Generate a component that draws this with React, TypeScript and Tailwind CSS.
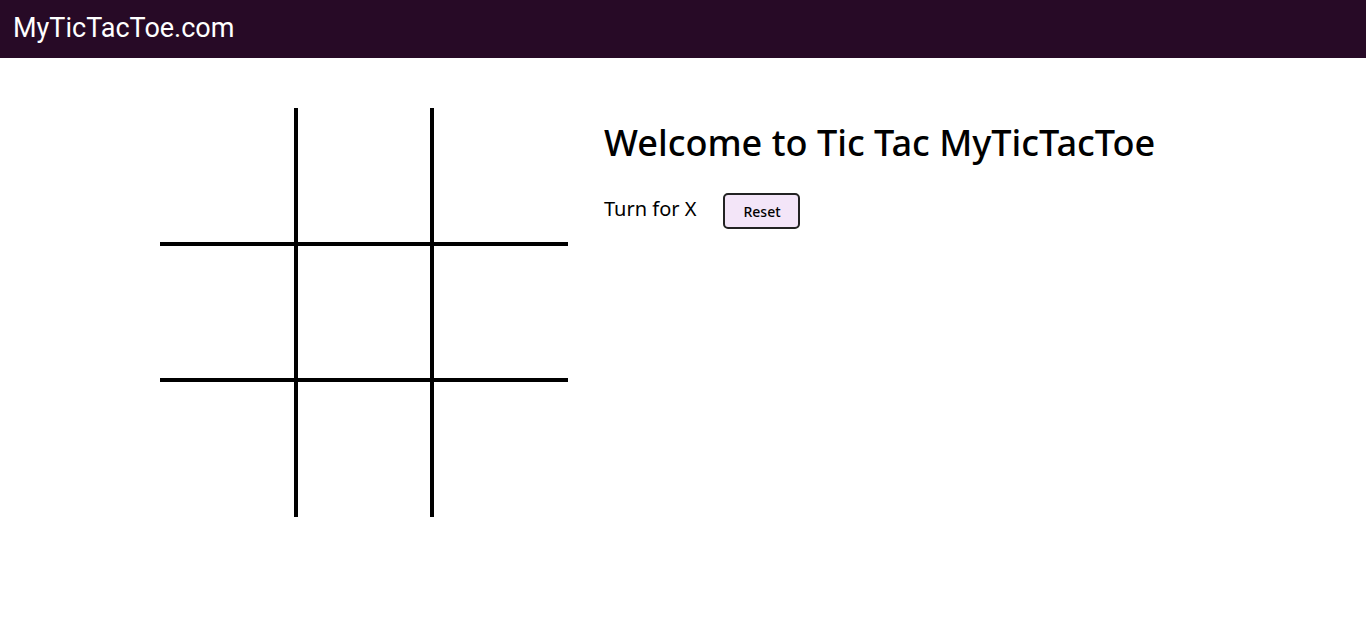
import React, { useState } from 'react';

type Cell = 'X' | 'O' | null;

const cellBorder = (i: number) => {
  const row = Math.floor(i / 3);
  const col = i % 3;
  const classes: string[] = [];
  if (row > 0) classes.push('border-t-2');
  if (row < 2) classes.push('border-b-2');
  if (col > 0) classes.push('border-l-2');
  if (col < 2) classes.push('border-r-2');
  return classes.join(' ');
};

export default function App() {
  const [cells, setCells] = useState<Cell[]>(Array(9).fill(null));
  const [turn, setTurn] = useState<'X' | 'O'>('X');

  const play = (i: number) => {
    if (cells[i]) return;
    const next = [...cells];
    next[i] = turn;
    setCells(next);
    setTurn(turn === 'X' ? 'O' : 'X');
  };

  const reset = () => {
    setCells(Array(9).fill(null));
    setTurn('X');
  };

  return (
    <div className="h-screen overflow-y-scroll bg-white">
      <div className="min-h-[1424px]">
        {/* top bar */}
        <header className="h-[58px] bg-[#270a26] flex items-center px-[13px]">
          <h1 className="text-white text-[27px] leading-none font-['Roboto',sans-serif] pb-[2px]">
            MyTicTacToe.com
          </h1>
        </header>

        <main className="flex pl-[160px] pt-[50px] gap-[36px]">
          <div className="grid grid-cols-[136px_136px_136px] grid-rows-[136px_136px_137px] shrink-0">
            {cells.map((c, i) => (
              <button
                key={i}
                onClick={() => play(i)}
                className={`${cellBorder(i)} border-black flex items-center justify-center text-6xl font-['Noto_Sans',sans-serif] cursor-pointer`}
              >
                {c}
              </button>
            ))}
          </div>

          <div className="pt-[12px] font-['Noto_Sans',sans-serif] text-black">
            <h2 className="text-[36.1px] leading-[44px] font-medium">
              Welcome to Tic Tac MyTicTacToe
            </h2>
            <div className="flex items-center mt-[29px] gap-[27px]">
              <span className="text-[20px] leading-none pb-[4px]">Turn for {turn}</span>
              <button
                onClick={reset}
                className="w-[77px] h-[36px] bg-[#f3e5f8] border-2 border-[#222] rounded-[5px] text-[14px] font-medium cursor-pointer"
              >
                Reset
              </button>
            </div>
          </div>
        </main>
      </div>
    </div>
  );
}
